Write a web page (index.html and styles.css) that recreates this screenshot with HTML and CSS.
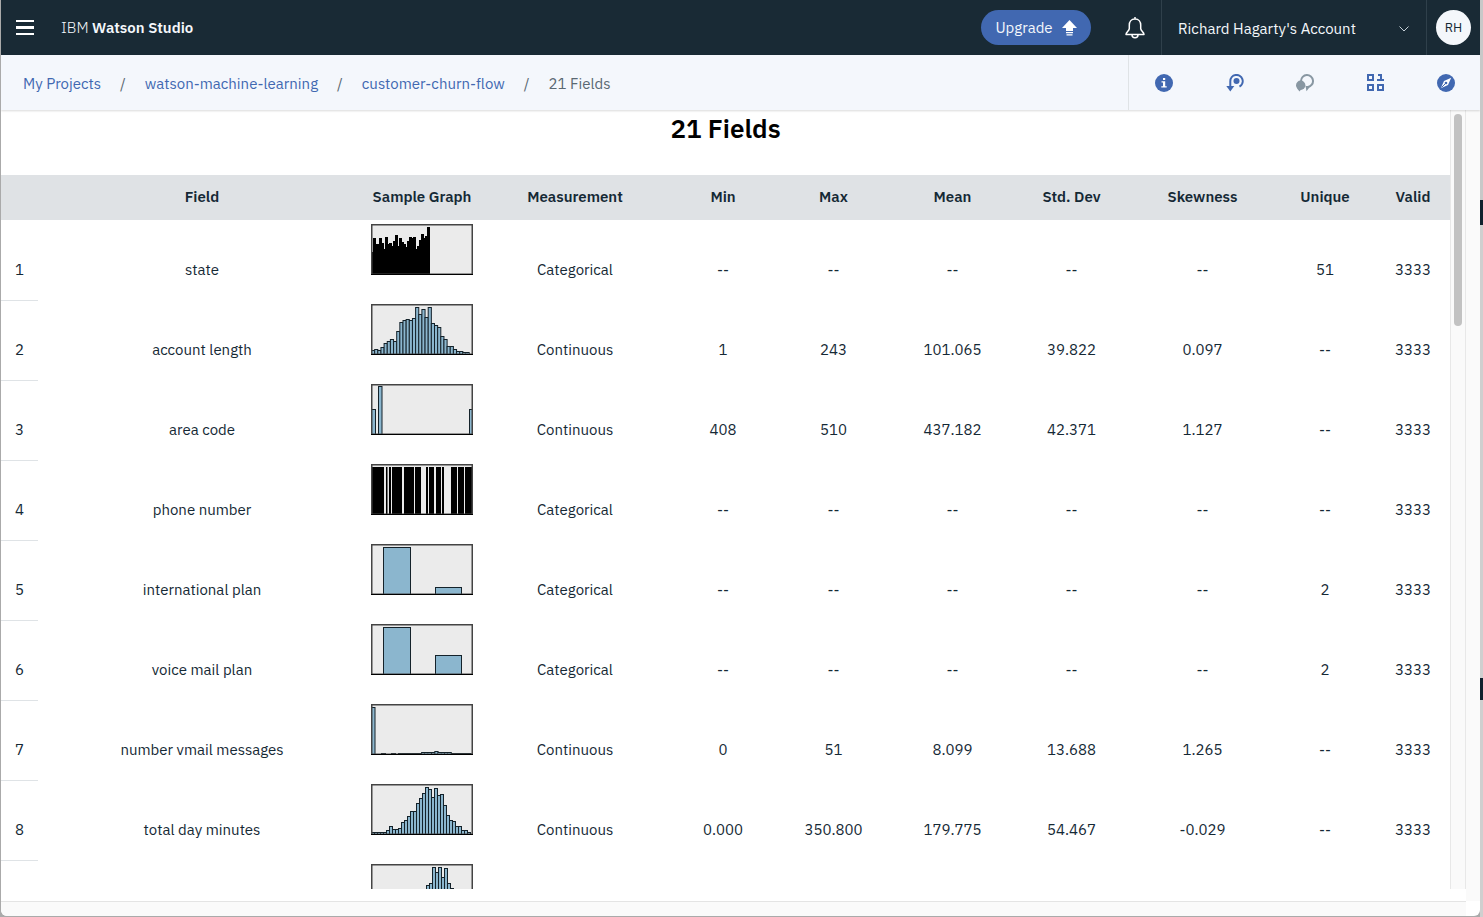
FILE: index.html
```html
<!DOCTYPE html>
<html lang="en">
<head>
<meta charset="utf-8">
<title>21 Fields - IBM Watson Studio</title>
<link rel="stylesheet" href="styles.css">
</head>
<body>
<div class="window">
  <header class="topbar">
    <button class="menu" aria-label="Menu"><svg width="18" height="16" viewBox="0 0 18 16"><path d="M0 0h18v2H0zM0 6h18v3H0zM0 13h18v2H0z" fill="#fff"/></svg></button>
    <a class="brand" href="#">IBM <b>Watson Studio</b></a>
    <button class="upgrade">Upgrade <svg width="15" height="16" viewBox="0 0 15 16" fill="#fff"><path d="M7.500 0 15 8h-4v3H4V8H0zM4 12h7v1.200H4zM4.500 14.200h6v1.200h-6z"/></svg></button>
    <button class="bell" aria-label="Notifications"><svg width="20" height="22" viewBox="0 0 20 22" fill="none" stroke="#fff" stroke-width="1.500" stroke-linejoin="round"><path d="M10 0v2M10 2C6 2 4.300 5 4.300 8v3.500c0 2.500-3.300 3.500-3.300 6h18c0-2.500-3.300-3.500-3.300-6V8c0-3-1.700-6-5.700-6zM7 18c0 3.500 6 3.500 6 0"/></svg></button>
    <button class="account"><span>Richard Hagarty's Account</span><svg width="10" height="6" viewBox="0 0 10 6" fill="none" stroke="#c5d0d8"><path d="M.5.5 5 5 9.500.5"/></svg></button>
    <div class="user"><button class="avatar">RH</button></div>
  </header>
  <div class="subbar">
    <nav class="crumbs" aria-label="Breadcrumb">
      <a href="#">My Projects</a><i>/</i><a href="#">watson-machine-learning</a><i>/</i><a href="#">customer-churn-flow</a><i>/</i><span>21 Fields</span>
    </nav>
    <div class="tools">
      <button aria-label="Information"><svg width="18" height="18" viewBox="0 0 18 18"><circle cx="9" cy="9" r="9" fill="#4168b1"/><path d="M8 4h2.200v2H8zM6.500 7.300h3.700v4.900h1.500v1.300H6.300v-1.300H8V8.600H6.500z" fill="#fff"/></svg></button>
      <button aria-label="Lineage"><svg width="18" height="18" viewBox="0 0 18 18"><path d="M4.300 13V7.200A6.200 6.200 0 1 1 13.500 12.600" fill="none" stroke="#4168b1" stroke-width="2"/><circle cx="10.500" cy="7" r="3" fill="#4168b1"/><path d="M.3 12h8L4.300 17.500z" fill="#4168b1"/></svg></button>
      <button aria-label="Comments"><svg width="18" height="18" viewBox="0 0 18 18"><path d="M5 7A6 6 0 1 1 12 13" fill="none" stroke="#8897a2" stroke-width="2"/><circle cx="4.700" cy="11.200" r="4.700" fill="#8897a2"/><path d="M1.500 13h5.500L3.500 17.500 1.500 15zM9.500 12h5l-4 5.200z" fill="#8897a2"/></svg></button>
      <button aria-label="Data"><svg width="18" height="18" viewBox="0 0 18 18" fill="none" stroke="#4168b1" stroke-width="2"><path d="M1 1h5v5H1zM1 11h5v5H1zM11 11h5v5h-5zM11 1h3v6M10 6h7"/></svg></button>
      <button aria-label="Explore"><svg width="18" height="18" viewBox="0 0 18 18"><circle cx="9" cy="9" r="9" fill="#4168b1"/><path d="M14.200 3.800 11 11l-7.200 3.200L7 7z" fill="#fff"/><path d="m4.500 13.500 4-4" stroke="#4168b1"/><circle cx="9" cy="9" r="1.300" fill="#4168b1"/></svg></button>
    </div>
  </div>
  <main class="content">
    <div class="pane">
      <h1>21 Fields</h1>
      <table>
        <colgroup><col class="c-num"><col><col class="c-graph"><col class="c-measure"><col class="c-small"><col class="c-stat"><col class="c-stat"><col class="c-stat"><col class="c-skew"><col class="c-small"><col class="c-valid"></colgroup>
        <thead><tr><th></th><th>Field</th><th>Sample Graph</th><th>Measurement</th><th>Min</th><th>Max</th><th>Mean</th><th>Std. Dev</th><th>Skewness</th><th>Unique</th><th>Valid</th></tr></thead>
        <tbody id="rows"></tbody>
      </table>
    </div>
    <div class="track"><div class="thumb"></div></div>
    <div class="outer-track"></div>
  </main>
  <div class="bottom-track"><div></div></div>
</div>
<script src="script.js"></script>
</body>
</html>
```
FILE: styles.css
```css
* { box-sizing: border-box; }
body {
  margin: 0;
  height: 100vh;
  padding: 0 3px 1px 1px;
  background: linear-gradient(#c8c8c8 0 200px, #10222e 200px 225px, #cfcfcf 225px 678px, #10222e 678px 700px, #cfcfcf 700px) right / 3px 100% no-repeat #aaa;
  font: 15px/20px "IBM Plex Sans", "Noto Sans", sans-serif;
  color: #152935;
}
button { border: 0; padding: 0; background: none; font: inherit; color: inherit; }
a { color: #4168b1; text-decoration: none; }
svg { display: block; }
.window {
  display: flex;
  flex-direction: column;
  height: 100%;
  overflow: hidden;
  background: #fff;
  border-radius: 0 0 6px 6px;
}
.topbar { display: flex; flex: 0 0 55px; align-items: center; background: #192a35; color: #f4f7fb; }
.menu { margin-left: 15px; }
.brand { margin: 0 auto 0 27px; color: inherit; font-weight: 300; }
.brand b { font-weight: 600; }
.upgrade {
  display: flex;
  align-items: center;
  justify-content: center;
  gap: 9px;
  width: 110px;
  height: 35px;
  border-radius: 18px;
  background: #4168b1;
}
.bell { margin: 0 16px 0 34px; }
.account {
  display: flex;
  align-items: center;
  justify-content: space-between;
  width: 266px;
  height: 55px;
  padding: 2px 17px 0 16px;
  border: solid #2f404b;
  border-width: 0 1px;
}
.user { width: 53px; padding-left: 9px; }
.avatar { width: 35px; height: 35px; border-radius: 50%; background: #f4f7fb; color: #152935; font-size: 13px; }
.subbar {
  display: flex;
  flex: 0 0 55px;
  position: relative;
  background: #f4f7fc;
  box-shadow: 0 1px 2px #00000026;
}
.crumbs { display: flex; flex: 1; align-items: center; gap: 19px; padding: 2px 0 0 22px; color: #5a6872; }
.crumbs i { font-style: normal; }
.tools {
  display: flex;
  align-items: center;
  justify-content: space-between;
  width: 352px;
  padding: 0 25px 0 26px;
  border-left: 1px solid #dfe3e6;
}
.content { display: flex; flex: 1; min-height: 0; }
.pane { flex: 1; min-width: 0; margin-bottom: 12px; overflow: hidden; }
h1 { margin: 0; height: 65px; font-size: 26px; line-height: 36px; font-weight: 600; text-align: center; color: #000; }
table { width: 100%; table-layout: fixed; border-collapse: separate; border-spacing: 0; text-align: center; }
.c-num { width: 37px; }
.c-graph { width: 112px; }
.c-measure { width: 194px; }
.c-small { width: 102px; }
.c-stat { width: 119px; }
.c-skew { width: 143px; }
.c-valid { width: 74px; }
th { height: 45px; padding: 0 0 2px; background: #dfe2e5; font-weight: 600; white-space: nowrap; }
td { height: 80px; padding: 20px 0 0; font-weight: 400; }
tbody td:first-child { box-shadow: 0 1px #dfe3e6; }
td.graph { padding: 4px 5px 0; vertical-align: top; }
.track { width: 16px; margin-bottom: 12px; padding: 4px 3px; background: #fafafa; border: solid #e8e8e8; border-width: 0 1px; }
.thumb { width: 8px; height: 212px; border-radius: 4px; background: #c2c2c2; }
.outer-track { width: 14px; background: #fafafa; }
.bottom-track { display: flex; flex: 0 0 15px; }
.bottom-track div { flex: 1; margin-right: 14px; border-top: 1px solid #e4e4e4; background: #fafafa; }
```
FILE: script.js
```js
const even = (heights, step, start = 0) => heights.map((h, i) => [start + i * step, step, h]);
const charts = {
  state: { fill: '#000', bars: [[0, 2, 22]].concat(even([36,30,30,36,31,25,37,30,31,28,33,39,28,36,32,30,27,33,37,36,37,25,28,34,40,36,38,47], 2, 2)) },
  length: { bars: even([4,5,4,7,11,13,15,13,23,32,34,35,34,36,47,40,45,37,47,31,29,27,18,15,8,8,5,3,3,2,2], 3.15) },
  area: { bars: [[0, 4, 25], [7, 3.5, 48], [98, 3, 25]] },
  phone: { fill: '#000', bars: [[1,11,47],[15,0.5,47],[18,1,47],[21,9,47],[33,9,47],[44,5,47],[55,1,47],[58,4,47],[65,4,47],[71,1,47],[80,5,47],[87,5,47],[94,6,47]] },
  plan: { bars: [[12, 27, 47], [64, 26, 7]] },
  voice: { bars: [[12, 27, 47], [64, 26, 19]] },
  messages: { bars: [[0, 3.5, 47], [10, 4, 1], [20, 4, 1]].concat(even([1,1,1,1,1,1,1,2,2,2,2,3,2,2,2,2,1,1,1,1,1,1], 3.3, 27)) },
  minutes: { bars: even([2,2,2,2,2,4,8,5,5,6,12,14,18,23,23,31,36,41,47,45,37,46,39,40,29,19,14,13,8,8,4,4,2], 3) },
  calls: { bars: even([4,6,10,14,23,29,31,47,42,47,37,46,31,26,20,10], 3, 40) }
};
function draw(name) {
  const { fill = '#8bb6ce', bars } = charts[name];
  const stroke = fill === '#000' ? '#000' : '#14222a';
  const rects = bars.map(([x, w, h]) => `<rect x="${x + .5}" y="${50.5 - h}" width="${w}" height="${h}" fill="${fill}"/>`).join('');
  return `<svg width="102" height="51" viewBox="0 0 102 51" stroke="${stroke}"><rect x=".5" y=".5" width="101" height="50" fill="#ebebeb" stroke="none"/>${rects}<rect x=".75" y=".75" width="100.5" height="49.5" fill="none" stroke="#444" stroke-width="1.5"/><path d="M0 50.5h102" stroke="#000"/></svg>`;
}
const C = 'Categorical', N = 'Continuous', E = '--';
const rows = [
  ['state', 'state', C, E, E, E, E, E, '51', '3333'],
  ['account length', 'length', N, '1', '243', '101.065', '39.822', '0.097', E, '3333'],
  ['area code', 'area', N, '408', '510', '437.182', '42.371', '1.127', E, '3333'],
  ['phone number', 'phone', C, E, E, E, E, E, E, '3333'],
  ['international plan', 'plan', C, E, E, E, E, E, '2', '3333'],
  ['voice mail plan', 'voice', C, E, E, E, E, E, '2', '3333'],
  ['number vmail messages', 'messages', N, '0', '51', '8.099', '13.688', '1.265', E, '3333'],
  ['total day minutes', 'minutes', N, '0.000', '350.800', '179.775', '54.467', '-0.029', E, '3333'],
  ['', 'calls', '', '', '', '', '', '', '', '']
];
document.getElementById('rows').innerHTML = rows.map(([field, chart, ...rest], i) =>
  `<tr><td>${field && i + 1}</td><td>${field}</td><td class="graph">${draw(chart)}</td>${rest.map(v => `<td>${v}</td>`).join('')}</tr>`).join('');
```
